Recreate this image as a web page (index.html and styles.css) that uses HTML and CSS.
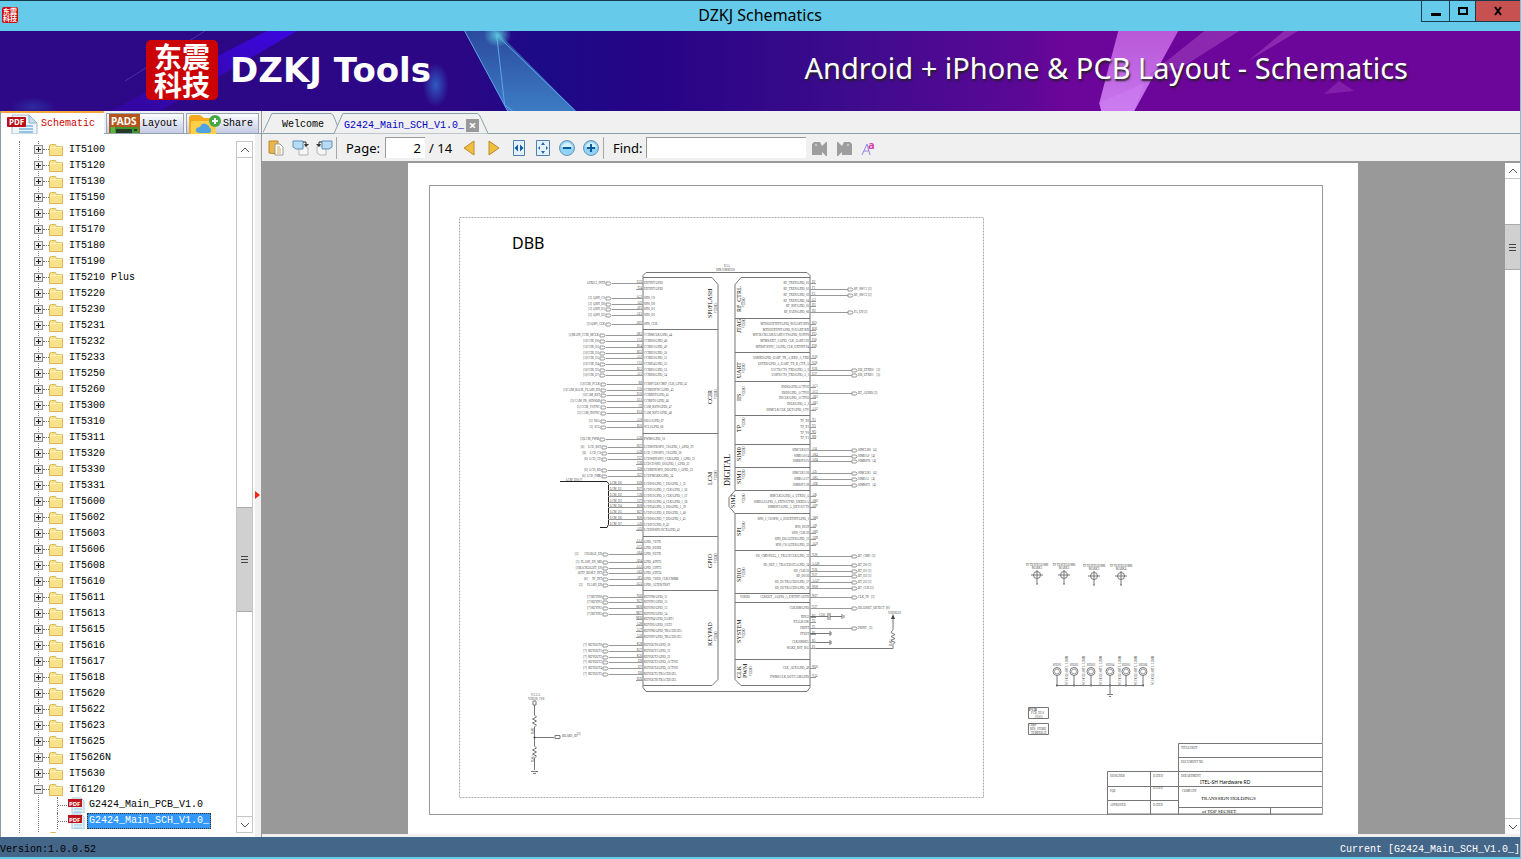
FILE: index.html
```html
<!DOCTYPE html>
<html lang="en">

<head>
    <meta charset="UTF-8">
    <meta name="viewport" content="width=device-width, initial-scale=1.0">
    <title>DZKJ Schematics</title>
    <link rel="stylesheet" href="styles.css">
</head>

<body>
    <header class="titlebar">
        <div class="app-icon"><span>东震</span><span>科技</span></div>
        <h1>DZKJ Schematics</h1>
        <div class="window-buttons">
            <button class="win" aria-label="Minimize"><svg width="12" height="12"><path d="M1 8h10v3H1z" /></svg></button>
            <button class="win win-max" aria-label="Maximize"><svg width="12" height="12"><path d="M2 3h8v6H2z" fill="none" stroke="#000" stroke-width="2" /></svg></button>
            <button class="win win-close" aria-label="Close"><svg width="12" height="12"><path d="M3 2l6 8M9 2l-6 8" stroke="#000" stroke-width="2" /></svg></button>
        </div>
    </header>

    <div class="banner">
        <svg class="banner-art" viewBox="0 0 1521 80" preserveAspectRatio="none">
            <defs>
                <linearGradient id="gBase">
                    <stop offset="0" stop-color="#2d0887" />
                    <stop offset=".3" stop-color="#2c0785" />
                    <stop offset=".36" stop-color="#1c0a86" />
                    <stop offset=".43" stop-color="#260485" />
                    <stop offset=".55" stop-color="#3b0b8c" />
                    <stop offset=".67" stop-color="#5a0895" />
                    <stop offset=".7" stop-color="#6c059a" />
                    <stop offset="1" stop-color="#6c0599" />
                </linearGradient>
                <linearGradient id="gBlue" x1="0" y1="0" x2="0" y2="1">
                    <stop offset="0" stop-color="#2b4a9e" />
                    <stop offset="1" stop-color="#3c7cc4" />
                </linearGradient>
                <linearGradient id="gRay" x1="0" y1="1" x2="1" y2="0">
                    <stop offset="0" stop-color="#3a06c0" stop-opacity=".4" />
                    <stop offset="1" stop-color="#3b07e0" />
                </linearGradient>
                <linearGradient id="gPink" x1="0" y1="0" x2="0" y2="1">
                    <stop offset="0" stop-color="#b958d8" />
                    <stop offset="1" stop-color="#c876ee" />
                </linearGradient>
                <radialGradient id="gGlow">
                    <stop offset="0" stop-color="#3070d0" stop-opacity=".8" />
                    <stop offset="1" stop-color="#3070d0" stop-opacity="0" />
                </radialGradient>
                <radialGradient id="gStar">
                    <stop offset="0" stop-color="#5cd0e0" stop-opacity=".9" />
                    <stop offset="1" stop-color="#5cd0e0" stop-opacity="0" />
                </radialGradient>
            </defs>
            <path d="M0 0h1521v80H0z" fill="url(#gBase)" />
            <path d="M267 0h30L160 80h-50z" fill="url(#gRay)" />
            <path d="M205 0L125 50" stroke="#5a4ac0" opacity=".6" />
            <ellipse cx="436" cy="54" rx="13" ry="22" fill="url(#gGlow)" />
            <ellipse cx="33" cy="76" rx="24" ry="10" fill="url(#gGlow)" opacity=".4" />
            <path d="M465 0h32l79 80h-68z" fill="url(#gBlue)" />
            <path d="M497 4l79 76M465 0l43 80M497 4l8 70 8 6" fill="none" stroke="#5fa4ea" />
            <ellipse cx="498" cy="4" rx="14" ry="12" fill="url(#gStar)" />
            <path d="M1119 0h60l-44 80h-33l-2-8z" fill="url(#gPink)" />
            <path d="M1100 72l45-20-10 28h-33z" fill="#d48cf5" opacity=".3" />
            <path d="M1205 0h35l-60 38-30 6zM1285 0h14l-50 30z" fill="#a040c0" opacity=".6" />
            <path d="M1340 50l15 10-30 3z" fill="#8b2bb0" opacity=".7" />
        </svg>
        <div class="brand">
            <div class="brand-logo"><span>东震</span><span>科技</span></div>
            <strong>DZKJ Tools</strong>
        </div>
        <p class="slogan">Android + iPhone &amp; PCB Layout - Schematics</p>
    </div>

    <main class="workspace">
        <aside class="sidebar">
            <nav class="side-tabs">
                <button class="side-tab active">
                    <svg width="32" height="20" viewBox="0 0 32 20">
                        <path d="M5 1h17l8 8v11H5z" fill="#eef5fb" stroke="#a8bccb" />
                        <path d="M22 1l8 8h-8z" fill="#c6dff0" stroke="#8fb2ca" />
                        <path d="M12 12h14M12 15h14M12 18h14" stroke="#94c3e6" stroke-width="2" />
                        <rect y="3" width="19" height="10" rx="1" fill="#b80f18" />
                        <text x="2" y="11" class="icon-text" font-size="8">PDF</text>
                    </svg>
                    <span>Schematic</span>
                </button>
                <button class="side-tab">
                    <svg width="31" height="19" viewBox="0 0 31 19">
                        <path d="M0 0h31v19H0z" fill="#b5541c" />
                        <path d="M1 19v-6h29v6z" fill="#3f9630" />
                        <path d="M7 19v-4h16v4zM25 15h3v2h-3z" fill="#243b2a" />
                        <path d="M3 13v6M5 13v6" stroke="#83cc4b" />
                        <text x="2" y="11" class="icon-text" font-size="10">PADS</text>
                    </svg>
                    <span>Layout</span>
                </button>
                <button class="side-tab">
                    <svg width="32" height="20" viewBox="0 0 32 20">
                        <path d="M0 4q0-3 3-3h8l4 3h11v16H0z" fill="#f5a91b" />
                        <path d="M2 9q0-2 3-2h22v13H2z" fill="#ffd04a" />
                        <path d="M10 19q-4-1-3-4 1-2 4-2 2-5 6-3 4 2 3 3 4 2 1 6z" fill="#4fa3e3" />
                        <circle cx="26" cy="7" r="6" fill="#45a845" />
                        <path d="M26 4v6M23 7h6" stroke="#fff" stroke-width="2" />
                    </svg>
                    <span>Share</span>
                </button>
            </nav>
            <div class="side-body">
                <ul class="tree" id="tree"></ul>
                <div class="scrollbar side-scroll">
                    <button class="arrow" aria-label="Up"><svg width="10" height="10"><path d="M1 7l4-4 4 4" /></svg></button>
                    <div class="track"><div class="thumb"></div></div>
                    <button class="arrow" aria-label="Down"><svg width="10" height="10"><path d="M1 3l4 4 4-4" /></svg></button>
                </div>
                <div class="splitter"><svg width="5" height="8"><path d="M0 0l5 4-5 4z" fill="#f22414" /></svg></div>
            </div>
        </aside>

        <section class="document">
            <nav class="doc-tabs">
                <button class="doc-tab">
                    <svg viewBox="0 0 76 21" preserveAspectRatio="none"><path d="M0 20.500L9 1.500h60q2 0 4 6l3 8" /></svg>
                    <span>Welcome</span>
                </button>
                <button class="doc-tab current">
                    <svg viewBox="0 0 158 21" preserveAspectRatio="none"><path d="M0 20.500L9 .500h137q2 0 4 5l7 15" /></svg>
                    <span>G2424_Main_SCH_V1.0_</span>
                    <i class="close">×</i>
                </button>
            </nav>

            <div class="toolbar">
                <button aria-label="Copy"><svg width="16" height="16"><path d="M1 1h9v13l-9-1z" fill="#eab649" stroke="#bb8730" /><path d="M7 4h5l3 3v8H7z" fill="#fff" stroke="#9b9b98" /><path d="M9 7h3M9 9h4M9 11h4M9 13h4" stroke="#cfa963" /></svg></button>
                <button aria-label="Rotate left"><svg width="17" height="16"><path d="M7 6h6l3 2v7H7z" fill="#f6f6f6" stroke="#b4b4b4" /><path d="M1 1h10v8H4L1 7z" fill="#b8dbf3" stroke="#6291b9" /><path d="M11 2h3v3" fill="none" stroke="#333" /><path d="M12 4h5l-3 3z" fill="#333" /></svg></button>
                <button aria-label="Rotate right"><svg width="17" height="16"><path d="M1 6h9v9H4l-3-2z" fill="#f6f6f6" stroke="#b4b4b4" /><path d="M6 1h10v6l-3 2H6z" fill="#b8dbf3" stroke="#6291b9" /><path d="M6 2H3v3" fill="none" stroke="#333" /><path d="M0 4h5L3 7z" fill="#333" /></svg></button>
                <span class="sep"></span>
                <label for="page">Page:</label>
                <input id="page" class="page-input" type="text" value="2">
                <span class="page-total">/ 14</span>
                <button class="nav-button" aria-label="Previous page"><svg width="12" height="16"><path d="M11 1v14L1 8z" fill="#f0bf3e" stroke="#b78c32" /></svg></button>
                <button class="nav-button" aria-label="Next page"><svg width="12" height="16"><path d="M1 1v14l10-7z" fill="#f0bf3e" stroke="#b78c32" /></svg></button>
                <button aria-label="Fit width"><svg width="12" height="16"><path d="M.5.500h11v15H.5z" fill="#e3f1fb" stroke="#4c7fb0" /><path d="M5 4.500v7L1.500 8zM7 4.500v7L10.500 8z" fill="#145c9e" /></svg></button>
                <button aria-label="Fit page"><svg width="14" height="16"><path d="M.5.500h13v15H.5z" fill="#e3f1fb" stroke="#4c7fb0" /><path d="M7 2l2 3H5zM7 14l2-3H5zM2 8l2-2v4zM12 8l-2-2v4z" fill="#2c68a4" /></svg></button>
                <button aria-label="Zoom out"><svg width="16" height="16"><circle cx="8" cy="8" r="7.500" fill="#91d2f7" stroke="#6b95b4" /><path d="M2 7q6-9 12 0z" fill="#d5effc" /><path d="M4 7h8v2H4z" fill="#0e5b9b" /></svg></button>
                <button aria-label="Zoom in"><svg width="16" height="16"><circle cx="8" cy="8" r="7.500" fill="#91d2f7" stroke="#6b95b4" /><path d="M2 7q6-9 12 0z" fill="#d5effc" /><path d="M4 7h3V4h2v3h3v2H9v3H7V9H4z" fill="#0e5b9b" /></svg></button>
                <span class="sep"></span>
                <label for="find" class="find-label">Find:</label>
                <input id="find" class="find-input" type="text">
                <button aria-label="Find previous"><svg width="16" height="16"><path d="M0 4l2-2h6l2 4 4-4h1v14h-1l-4-4v3H0z" fill="#9d9d9d" /><path d="M3 4h2v2H3z" fill="#c8c8c8" /></svg></button>
                <button aria-label="Find next"><svg width="16" height="16"><path d="M16 4l-2-2H8L6 6 2 2H1v14h1l4-4v3h10z" fill="#9d9d9d" /><path d="M11 4h2v2h-2z" fill="#c8c8c8" /></svg></button>
                <button aria-label="Match case"><svg width="16" height="24"><path d="M2 19L7 8l3 11M4 15h5" fill="none" stroke="#9a83e4" /><text x="8" y="13" class="case-mark">a</text></svg></button>
            </div>

            <div class="viewer">
                <div class="page-area">
                    <div class="sheet">
                        <svg id="schematic" class="schematic" viewBox="408 163 950 671">
                            <path class="frame" d="M429.500 185.500h893v629h-893z" />
                            <path class="dash" d="M459.500 217.500h524v580h-524z" />
                            <text x="512" y="249" class="block-title">DBB</text>

                            <!-- chip body -->
                            <path class="line" d="M646 272.500h161l3 3v412l-3 4H646l-3-4v-412z" />
                            <path class="line" d="M643 277.500h69l6 7v395l-6 6h-69" />
                            <path class="line" d="M810 277.500h-69l-6 7v206l-6 7v9l6 7v166l6 6h69" />
                            <text x="724" y="267" class="tiny">U1A</text>
                            <text x="716" y="271" class="tiny">SPR-UMS9230</text>
                            <text transform="translate(730 486) rotate(-90)" class="digital">DIGITAL</text>

                            <!-- lcd bus -->
                            <path class="bus" d="M560 481.500h47l1.500 2v41l-1.500 3h-7" />
                            <text x="566" y="481" class="tiny">LCM_D[0:7]</text>

                            <!-- divider, lower left -->
                            <text x="531" y="696" class="tiny">V.1.2.A</text>
                            <text x="528" y="700" class="tiny">VDD18_1V8</text>
                            <path class="line" d="M533 701h3v4h-3zM534.500 705v10l2 2-4 2 4 2-4 2 4 2-2 2v19l2 2-4 2 4 2-4 2 4 2-2 2v12M531 771.500h7M533 773.500h3M534 737.500h20M555 735.500h5v3h-5z" />
                            <circle cx="534.500" cy="737.500" r="1" />
                            <text x="562" y="737" class="tiny">BOARD_ID</text>
                            <text x="577" y="735" class="tiny">[3]</text>
                            <text transform="translate(534 734) rotate(-90)" class="tiny">R201</text>
                            <text transform="translate(534 762) rotate(-90)" class="tiny">R202</text>

                            <!-- reset and caps, right -->
                            <path class="line" d="M810 616.500h18M828 613v7M830 613v7M830 616.500h12M842 614v5M844 615v3M810 633.500h20M830 631v5M831 632v3M810 642.500h20M830 640v5M831 641v3M810 648.500h83v-4l2-2-4-2 4-2-4-2 4-2-4-2 2-3v-13" />
                            <path d="M891 619l2-5 2 5z" />
                            <text x="888" y="614" class="tiny">VDDIO18</text>
                            <text x="819" y="616" class="tiny">C201</text>
                            <text transform="translate(892 646) rotate(-90)" class="tiny">R203</text>

                            <!-- revision boxes -->
                            <path class="line" d="M1028.500 707.500h20v11h-20zM1028.500 723.500h20v11h-20z" />
                            <text x="1029" y="711" class="small">PCB</text>
                            <text x="1031" y="714" class="tiny">FCB_H1.0</text>
                            <text x="1035" y="718" class="tiny">(V.01)</text>
                            <text x="1029" y="726" class="tiny">Chip#</text>
                            <text x="1030" y="730" class="tiny">RES_STORE</text>
                            <text x="1031" y="734" class="tiny">TEMPERAT</text>

                            <!-- title block -->
                            <path class="line block" d="M1322 743.500h-143.500v71M1178 757.500h144M1107.500 814V771.500H1322M1107 786.500h215M1107 800.500h71M1150.500 771v43M1178 807.500h144M1270.500 807v7M1107 814h215" />
                            <text x="1181" y="749" class="tiny">TITLE/DEPT</text>
                            <text x="1181" y="763" class="tiny">DOCUMENT NO</text>
                            <text x="1181" y="777" class="tiny">DEPARTMENT</text>
                            <text x="1182" y="792" class="tiny">COMPANY</text>
                            <text x="1110" y="777" class="tiny">DESIGNER</text>
                            <text x="1110" y="792" class="tiny">PQE</text>
                            <text x="1110" y="806" class="tiny">APPROVED</text>
                            <text x="1153" y="777" class="tiny">DATED</text>
                            <text x="1153" y="789" class="tiny">DATED</text>
                            <text x="1153" y="806" class="tiny">DATED</text>
                            <text x="1200" y="784" class="dept">ITEL-SH Hardware RD</text>
                            <text x="1201" y="800" class="holding">TRANSSION HOLDINGS</text>
                            <text x="1202" y="813" class="holding">of TOP SECRET</text>
                        </svg>
                    </div>
                </div>
                <div class="scrollbar view-scroll">
                    <button class="arrow" aria-label="Up"><svg width="10" height="10"><path d="M1 7l4-4 4 4" /></svg></button>
                    <div class="track"><div class="thumb"></div></div>
                    <button class="arrow" aria-label="Down"><svg width="10" height="10"><path d="M1 3l4 4 4-4" /></svg></button>
                </div>
            </div>
        </section>
    </main>

    <footer class="statusbar">
        <span class="version">Version:1.0.0.52</span>
        <span>Current [G2424_Main_SCH_V1.0_]</span>
    </footer>

    <script src="script.js"></script>
</body>

</html>
```
FILE: styles.css
```css
* {
    box-sizing: border-box;
}

body {
    margin: 0;
    height: 100vh;
    display: flex;
    flex-direction: column;
    overflow: hidden;
    background: #f0f0f0;
    border-right: 1px solid #66cbea;
    border-bottom: 2px solid #66cbea;
    font-family: "Liberation Mono", "Noto Sans CJK SC", monospace;
    font-size: 10px;
    color: #000;
}

button {
    font: inherit;
    color: inherit;
    border: none;
    background: none;
    padding: 0;
}

svg {
    display: block;
    flex: none;
}

/* title bar */
.titlebar {
    display: flex;
    align-items: center;
    position: relative;
    height: 31px;
    flex: none;
    background: #66cbea;
    border-top: 1px solid #16394b;
}

.titlebar h1 {
    flex: 1;
    margin: 0;
    text-align: center;
    font: 16px/24px "Noto Sans", sans-serif;
    padding-bottom: 2px;
}

.app-icon {
    position: absolute;
    left: 2px;
    top: 6px;
    width: 16px;
    height: 16px;
    padding-top: 1px;
    border-radius: 2px;
    background: #cc0a0a;
    color: #fff;
    font: bold 7px/7px "Noto Sans CJK SC", sans-serif;
    text-align: center;
}

.app-icon span,
.brand-logo span {
    display: block;
}

.window-buttons {
    position: absolute;
    right: 0;
    top: 0;
    display: flex;
    height: 21px;
    border: 1px solid #163b4b;
    border-width: 0 0 1px 1px;
}

.win {
    display: flex;
    align-items: center;
    justify-content: center;
    width: 28px;
    border-right: 1px solid #163b4b;
}

.win-max {
    width: 26px;
}

.win-close {
    width: 44px;
    border-right: none;
    background: #c75050;
}

/* banner */
.banner {
    position: relative;
    flex: none;
    display: flex;
    align-items: center;
    justify-content: space-between;
    height: 80px;
    padding: 0 112px 0 146px;
    color: #fff;
}

.banner-art {
    position: absolute;
    top: 0;
    left: 0;
    width: 100%;
    height: 100%;
}

.brand {
    position: relative;
    display: flex;
    align-items: center;
    gap: 12px;
    margin-bottom: 2px;
}

.brand-logo {
    width: 72px;
    height: 60px;
    padding-top: 2px;
    border-radius: 5px;
    background: #cb0307;
    font: bold 28px/28px "Noto Sans CJK SC", sans-serif;
    text-align: center;
}

.brand strong {
    font: bold 34px "DejaVu Sans", sans-serif;
}

.slogan {
    position: relative;
    margin: 0 0 8px;
    font: 29px "Noto Sans", sans-serif;
    text-shadow: 1px 2px 2px #222;
    white-space: nowrap;
}

/* workspace */
.workspace {
    flex: 1;
    min-height: 0;
    display: flex;
}

.sidebar {
    width: 261px;
    flex: none;
    display: flex;
    flex-direction: column;
    border-left: 1px solid #8a9ba6;
}

.side-tabs {
    display: flex;
    align-items: flex-end;
    gap: 2px;
    height: 23px;
    border-bottom: 1px solid #91a4ae;
}

.side-tab {
    display: flex;
    align-items: center;
    gap: 2px;
    height: 20px;
    padding: 0 5px 0 2px;
    border: 1px solid #98a5b7;
    border-bottom: none;
    background: linear-gradient(#fdfdff, #c5cae5);
}

.side-tab.active {
    height: 23px;
    width: 103px;
    margin-bottom: -1px;
    border: none;
    border-top: 2px solid #f5a73b;
    background: #fff;
    color: #c00;
    padding-left: 6px;
}

.icon-text {
    font-family: "Noto Sans", sans-serif;
    font-weight: bold;
    fill: #fff;
}

.side-body {
    flex: 1;
    min-height: 0;
    display: flex;
    background: #fff;
}

.tree {
    position: relative;
    flex: 1;
    margin: 7px 0 4px 18px;
    padding: 0;
    list-style: none;
    overflow: hidden;
    border-left: 1px dotted #777;
}

.tree li {
    display: flex;
    align-items: center;
    height: 16px;
    padding-left: 14px;
    background: repeating-linear-gradient(#777 0 1px, #fff 1px 2px) 18px 0 / 1px 16px no-repeat;
    white-space: nowrap;
}

.expander {
    width: 9px;
    height: 9px;
    flex: none;
    background: linear-gradient(#222, #222) center / 5px 1px no-repeat, #ececec;
    border: 1px solid #8d8d8d;
}

.expander.plus {
    background: linear-gradient(#222, #222) center / 5px 1px no-repeat, linear-gradient(#222, #222) center / 1px 5px no-repeat, #ececec;
}

.stem {
    width: 6px;
    border-top: 1px dotted #777;
}

.tree li svg {
    margin-right: 6px;
}

.tree .leaf {
    padding-left: 37px;
}

.leaf .stem {
    width: 11px;
    height: 16px;
    border-left: 1px dotted #777;
    border-top: none;
    background: repeating-linear-gradient(90deg, #777 0 1px, #fff 1px 2px) 0 8px / 11px 1px no-repeat;
}

.tree .leaf svg {
    margin-right: 2px;
}

.leaf a {
    padding: 0 1px;
    line-height: 14px;
    border: 1px solid transparent;
    color: #000;
    text-decoration: none;
}

.leaf.selected a {
    background: #3399ff;
    border: 1px dotted #402a10;
    color: #fff;
}

.scrollbar {
    display: flex;
    flex-direction: column;
    width: 17px;
    border: 1px solid #c4c4c4;
    background: #fff;
}

.side-scroll {
    margin: 7px 2px 4px 0;
}

.view-scroll {
    width: 15px;
    border-width: 0;
}

.arrow {
    display: flex;
    align-items: center;
    justify-content: center;
    height: 16px;
    flex: none;
    border-bottom: 1px solid #c4c4c4;
}

.arrow:last-child {
    border-bottom: none;
    border-top: 1px solid #c4c4c4;
}

.arrow path {
    fill: none;
    stroke: #555;
}

.track {
    flex: 1;
    display: flex;
    flex-direction: column;
}

/* grip lines in the middle of the thumb */
.thumb {
    height: 105px;
    margin-top: 349px;
    border: 1px solid #aaa;
    border-width: 1px 0;
    background: repeating-linear-gradient(#444 0 1px, transparent 1px 3px) center / 7px 7px no-repeat, #d0d0d0;
}

.view-scroll .thumb {
    height: 46px;
    margin-top: 45px;
}

.splitter {
    display: flex;
    align-items: center;
    width: 6px;
    padding-top: 18px;
    background: #f0f0f0;
}

/* document tabs */
.document {
    flex: 1;
    min-width: 0;
    display: flex;
    flex-direction: column;
    border-left: 1px solid #999;
}

.doc-tabs {
    display: flex;
    align-items: flex-end;
    flex: none;
    height: 23px;
    padding-left: 1px;
    border-bottom: 1px solid #8ba0ac;
}

.doc-tab {
    position: relative;
    display: flex;
    align-items: center;
    height: 21px;
    padding: 3px 14px 0 19px;
}

.doc-tab svg {
    position: absolute;
    top: 0;
    left: 0;
    width: 100%;
    height: 100%;
    fill: #f0f0f0;
    stroke: #8ba0ac;
}

.doc-tab span,
.doc-tab .close {
    position: relative;
}

.doc-tab.current {
    margin: 0 0 -1px -4px;
    padding: 3px 10px 0;
    color: #0000c8;
}

.doc-tab .close {
    width: 13px;
    height: 13px;
    margin-left: 2px;
    background: #999;
    color: #fff;
    font: bold 13px/13px "Noto Sans", sans-serif;
}

/* toolbar */
.toolbar {
    display: flex;
    align-items: center;
    flex: none;
    height: 29px;
    padding-left: 2px;
    border-bottom: 2px solid #999;
    font: 13px "Noto Sans", sans-serif;
}

.toolbar button {
    display: flex;
    align-items: center;
    justify-content: center;
    width: 24px;
    height: 24px;
}

.toolbar .nav-button {
    width: 25px;
}

.sep {
    width: 1px;
    height: 22px;
    margin-right: 9px;
    background: #a8a8a8;
}

.toolbar label {
    margin-right: 5px;
}

.toolbar .find-label {
    margin-right: 3px;
}

.toolbar input {
    height: 21px;
    padding: 0 4px;
    border: 1px solid #999;
    border-width: 1px 0 0 1px;
    background: #fff;
    font: inherit;
}

.toolbar .page-input {
    width: 40px;
    text-align: right;
}

.page-total {
    width: 28px;
    margin-left: 4px;
}

.find-input {
    width: 160px;
    margin-right: 2px;
}

.case-mark {
    font: bold 11px "Noto Sans", sans-serif;
    fill: #d43fb0;
}

/* page viewer */
.viewer {
    flex: 1;
    min-height: 0;
    display: flex;
    margin-bottom: 3px;
}

.page-area {
    flex: 1;
    display: flex;
    justify-content: center;
    overflow: hidden;
    background: #999;
}

.sheet {
    background: #fff;
    margin-right: 1px;
}

.schematic {
    width: 950px;
    height: 671px;
    font-family: "Liberation Serif", serif;
    fill: #444;
}

.frame,
.line,
.dash,
.bus,
.wire {
    fill: none;
    stroke: #777;
    stroke-width: 1px;
}

.frame {
    stroke: #999;
}

.wire {
    stroke: #999;
}

.dash {
    stroke: #aaa;
    stroke-dasharray: 2 1;
}

.bus {
    stroke: #222;
}

.tiny {
    font-size: 3px;
    white-space: pre;
}

.small {
    font-size: 4px;
    font-weight: bold;
}

.group {
    font-size: 6px;
    fill: #000;
}

.digital {
    font-size: 8px;
    fill: #000;
}

.block-title {
    font: 16px "Noto Sans", sans-serif;
    fill: #000;
}

.dept {
    font: 5px "Noto Sans", sans-serif;
    fill: #000;
}

.holding {
    font-size: 5px;
    fill: #000;
}

/* status bar */
.statusbar {
    flex: none;
    display: flex;
    align-items: center;
    justify-content: space-between;
    height: 20px;
    padding-top: 4px;
    background: #446688;
    color: #fff;
}

.version {
    color: #000;
}
```
FILE: script.js
```js
const folders = ['IT5100', 'IT5120', 'IT5130', 'IT5150', 'IT5160', 'IT5170', 'IT5180', 'IT5190', 'IT5210 Plus',
    'IT5220', 'IT5230', 'IT5231', 'IT5232', 'IT5233', 'IT5250', 'IT5260', 'IT5300', 'IT5310', 'IT5311', 'IT5320',
    'IT5330', 'IT5331', 'IT5600', 'IT5602', 'IT5603', 'IT5606', 'IT5608', 'IT5610', 'IT5611', 'IT5613', 'IT5615',
    'IT5616', 'IT5617', 'IT5618', 'IT5620', 'IT5622', 'IT5623', 'IT5625', 'IT5626N', 'IT5630', 'IT6120'];
const files = ['G2424_Main_PCB_V1.0', 'G2424_Main_SCH_V1.0_'];

const folderIcon = '<svg width="14" height="13"><path d="M.5 2.500l2-1h4l1 2h6v9H.5z" fill="#fbe28a" stroke="#dcb552"/><path d="M1 5l12-1" stroke="#fff6c9"/></svg>';
const pdfIcon = '<svg width="17" height="16"><path d="M4 1h9l3 3v12H4z" fill="#e6f2fa" stroke="#a9c6d8"/><path d="M6 12h8M6 15h8" stroke="#8ec6e9"/><path d="M0 2h14v8H0z" fill="#c0141c"/><text x="1" y="9" class="icon-text" font-size="6">PDF</text></svg>';

let rows = '';
folders.forEach(name => {
    const sign = name === 'IT6120' ? '' : ' plus';
    rows += `<li><button class="expander${sign}" aria-label="Toggle ${name}"></button><span class="stem"></span>${folderIcon}<span>${name}</span></li>`;
});
files.forEach((name, i) => {
    rows += `<li class="leaf${i === 1 ? ' selected' : ''}"><span class="stem"></span>${pdfIcon}<a href="#">${name}</a></li>`;
});
rows += `<li><button class="expander plus" aria-label="Toggle"></button><span class="stem"></span>${folderIcon}</li>`;
document.getElementById('tree').innerHTML = rows;

// [y, pin, signal, port label, port x]
const leftPins = [
    [283, 'U23', 'EXTINT/GPIO', 'GPIO13_INT9', 606], [289, 'T24', 'EXTINT/GPIO'],
    [298, 'AG2', 'SPI0_CS', '[3]  QSPI_CS', 606], [304, 'AJ2', 'SPI0_D0', '[3]  QSPI_D0', 606],
    [309, 'AF2', 'SPI0_D1', '[3]  QSPI_D1', 606], [315, 'AE1', 'SPI0_D2', '[3]  QSPI_D2', 606], [324, 'AH1', 'SPI0_CLK', '[3] QSPI_CLK', 606],
    [335, 'AK3', 'CCIRMCLK/GPIO_44', '[5]MAIN_CCIR_MCLK', 600], [341, 'C13', 'CCIRD0/GPIO_48', '[5]CCIR_D0', 600],
    [347, 'B14', 'CCIRD1/GPIO_49', '[5]CCIR_D1', 600], [353, 'B13', 'CCIRD2/GPIO_50', '[5]CCIR_D2', 600],
    [358, 'A12', 'CCIRD3/GPIO_51', '[5]CCIR_D3', 600], [364, 'C12', 'CCIRD4/GPIO_52', '[5]CCIR_D4', 600],
    [370, 'B11', 'CCIRD5/GPIO_53', '[5]CCIR_D5', 600], [375, 'A11', 'CCIRD6/GPIO_54', '[5]CCIR_D7', 600],
    [384, 'B9', 'CCIRPCLK/CMIF_CLK_GPIO_41', '[5]CCIR_PCLK', 601], [390, 'C10', 'CCIRHSYNC/GPIO_43', '[5]CAM_BACK_FLASH_EN', 601],
    [395, 'D10', 'CCIRRST/GPIO_45', '[5]CAM_RST', 601], [401, 'E11', 'CCIRPD1/GPIO_46', '[5] CAM_PD_SENSOR', 601],
    [407, 'C9', 'CAM_RST0/GPIO_47', '[5] CCIR_VSYNC', 601], [413, 'D12', 'CAM_RST1/GPIO_48', '[5] CAM_HSYNC', 601],
    [421, 'A10', 'SDA1/GPIO_67', '[5]  SDA', 601], [427, 'B10', 'SCL1/GPIO_68', '[5]  SCL', 601],
    [439, 'G26', 'PWM0/GPIO_10', '[3]LCM_PWM', 600],
    [447, 'H27', 'LCDRSTB/SPI1_CS/GPIO_1_GPIO_29', '[6]     LCD_RST', 602], [453, 'G28', 'LCD_CSN/SPI1_CS/GPIO_30', '[6]     LCD_CS', 602],
    [459, 'F27', 'LCDWRN/SPI1_CLK/GPIO_1_GPIO_31', '[6]  LCD_CD', 602], [464, 'F28', 'LCDCD/SPI1_DI/GPIO_1_GPIO_32'],
    [470, 'E28', 'LCDRDN/SPI1_DO/GPIO_1_GPIO_33', '[6]  LCD_RD', 602], [476, 'E27', 'LCDFMARK/GPIO_34', '[6]  LCD_FMK', 602],
    [484, 'D28', 'LCDD0/GPIO_1_DO/GPIO_1_35'], [490, 'D27', 'LCDD1/GPIO_2_CLK/GPIO_1_36'],
    [496, 'C28', 'LCDD2/GPIO_3_CLK/GPIO_1_37'], [502, 'C27', 'LCDD3/GPIO_4_CLK/GPIO_1_38'],
    [507, 'B28', 'LCDD4/GPIO_5_DO/GPIO_1_39'], [513, 'B27', 'LCDD5/GPIO_6_DO/GPIO_1_40'],
    [519, 'B26', 'LCDD6/GPIO_7_DO/GPIO_1_41'], [525, 'A26', 'LCDD7/GPIO_8_42'], [530, 'A25', 'LCDD8/SPI1/DCX/GPIO_43'],
    [542, 'AA3', 'GPIO_7/UTX'], [548, 'AC5', 'GPIO_8/URX'], [554, 'AB4', 'GPIO_9/UTX', '[3]        CHARGE_EN', 603],
    [562, 'AD4', 'GPIO_4/INT2', '[5]  FLASH_EN_MD', 603], [568, 'AA5', 'GPIO_5/INT3', '[3]BACKLIGHT_EN', 603],
    [573, 'AE5', 'GPIO_6/INT4', '[6]TP_RESET_INT', 603], [579, 'AF5', 'GPIO_7/SPI0_CLK/CMMB', '[6]      TP_INT', 603],
    [585, 'AG5', 'GPIO_ALTER/TRST', '[3]      FLASH_EN', 603],
    [597, 'N26', 'KEYIN0/GPIO_11', '[7] KEYIN0', 603], [602, 'N27', 'KEYIN1/GPIO_12', '[7] KEYIN1', 603],
    [608, 'M28', 'KEYIN2/GPIO_13', '[7] KEYIN2', 603], [614, 'M27', 'KEYIN3/GPIO_14', '[7] KEYIN3', 603],
    [619, 'M26', 'KEYIN4/GPIO_UART1'], [625, 'L28', 'KEYIN5/GPIO_1/UT2'], [631, 'L27', 'KEYIN6/GPIO_TRACEDATA'],
    [637, 'L26', 'KEYIN7/GPIO_TRACEDATA'],
    [645, 'K28', 'KEYOUT0/GPIO_20', '[7]  KEYOUT0', 603], [651, 'K27', 'KEYOUT1/GPIO_21', '[7]  KEYOUT1', 603],
    [657, 'K26', 'KEYOUT2/GPIO_22', '[7]  KEYOUT2', 603], [662, 'J28', 'KEYOUT3/GPIO_ACTIVE', '[7]  KEYOUT3', 603],
    [668, 'J27', 'KEYOUT4/GPIO_ACTIVE', '[7]  KEYOUT4', 603], [674, 'J26', 'KEYOUT5/TRACEDATA', '[7]  KEYOUT5', 603],
    [680, 'H26', 'KEYOUT6/TRACEDATA'],
];

const rightPins = [
    [283, 'E2', 'RF_TXEN/GPIO_01'], [289, 'F1', 'RF_TXEN/GPIO_02', 'RF_SWC1 [2]', 848], [295, 'F3', 'RF_TXEN/GPIO_03', 'RF_SWC2 [2]', 848],
    [301, 'G2', 'RF_TXEN/GPIO_04'], [306, 'H1', 'RF_RST/GPIO_05'], [312, 'H2', 'RF_PAEN/GPIO_06', 'PA_EN [2]', 848],
    [324, 'R25', 'MTDO/EXTINT/GPIO_90/UART1RTS'], [330, 'R26', 'MTDI/EXTINT/GPIO_91/UART1RX'],
    [335, 'P25', 'MTCK/CKL32K/UART1CTS/GPIO_92/INT0'], [341, 'P26', 'MTMS/EXT_1/GPIO_CLK_UART1/93'],
    [347, 'P28', 'MTRST/SYNC_1/GPIO_CLK_EXTINT/94'],
    [358, 'V26', 'U0RXD/GPIO_UART_TX_A_RXD_A_TXD'], [364, 'V28', 'U0TXD/GPIO_A_UART_TX_B_CTX_A'],
    [370, 'U26', 'U1CTS/CTS_TXD/GPIO_A_0', 'DB_UTXD0    [3]', 852], [375, 'U27', 'U1RTS/CTS_TXD/GPIO_A_1', 'DB_UTXD1    [3]', 852],
    [387, 'AC1', 'IISDO/GPIO/ACTIVE'], [393, 'AC2', 'IISDI/GPIO_ACTIVE', 'BT_AUDIO [3]', 852],
    [398, 'AB2', 'IISCLK/GPIO_ACTIVE'], [404, 'AB1', 'IISLR/GPIO_A_2'], [410, 'AA2', 'IISMCLK/CLK_OUT/GPIO_1/TV'],
    [421, 'Y5', 'TP_X0'], [427, 'Y3', 'TP_X1'], [433, 'W5', 'TP_Y0'], [438, 'W6', 'TP_Y1'],
    [450, 'AJ4', 'SIMCLK0/23', 'SIMCLK0   [4]', 852], [456, 'AK4', 'SIMDA0/24', 'SIMDA0   [4]', 852], [461, 'AH4', 'SIMRST0/25', 'SIMRST0   [4]', 852],
    [473, 'AJ5', 'SIMCLK1/26', 'SIMCLK1   [4]', 852], [479, 'AK5', 'SIMDA1/27', 'SIMDA1   [4]', 852], [485, 'AH6', 'SIMRST1/28', 'SIMRST1   [4]', 852],
    [496, 'AJ6', 'SIMCLK2/GPIO_A_UTXD3_A'], [502, 'AK6', 'SIMDA2/GPIO_A_EXT0/UTXD_URXD3/A'], [507, 'AH7', 'SIMRST2/GPIO_A_EXT1/UCTS'],
    [519, 'AK8', 'SPI0_2_CS/SPI0_A_DI/EXTINT/GPIO_1'], [527, 'AJ9', 'SPI0_DI/29'], [533, 'AK9', 'SPI0_CLK/30'],
    [539, 'AH9', 'SPI0_DO/ALTER/GPIO_31'], [545, 'AG9', 'SPI0_CS/ALTER/GPIO_32'],
    [556, 'Y28', 'SD_CMD/PULL_1_TRACECLK/GPIO_33', 'BT_CMD  [3]', 852], [565, 'AA28', 'SD_DET_1_TRACEDATA/GPIO_34', 'BT_D0 [3]', 852],
    [571, 'Y26', 'SD_CLK/35', 'BT_D1 [3]', 852], [576, 'Y27', 'SD_D0/36', 'BT_D2 [3]', 852],
    [582, 'AA27', 'SD_D1/TRACED/GPIO_37', 'BT_D3 [3]', 852], [588, 'W28', 'SD_D2/TRACED/GPIO_38', 'BT_CLK [3]', 852],
    [597, 'W27', 'CLKOUT_A/GPIO_A_EXTINT/AUTO', 'CLK_IN   [3]', 852],
    [608, 'V27', 'CLK26M/GPIO', 'HEADSET_DETECT  [8]', 852], [617, 'R2', 'XIN32'], [622, 'T3', 'XTALB/32K'],
    [628, 'T1', 'PBINT', 'PBINT   [3]', 852], [634, 'R1', 'PTEST'], [642, 'R5', 'CLK26MSEL'], [648, 'P2', 'WAKE_RST_B/G'],
    [668, 'W26', 'CLK_AUX/GPIO_49'], [677, 'V24', 'PWM0/CLK_OUT/CAM/GPIO'],
];

const leftGroups = [['SPI/FLASH', 318], ['CCIR', 404], ['LCM', 485], ['GPIO', 568], ['KEYPAD', 646]];
const rightGroups = [['RF_CTRL', 312], ['JTAG', 333], ['UART', 378], ['IIS', 401], ['TP', 432], ['SIM0', 461],
    ['SIM1', 484], ['SIM2', 508], ['SPI', 536], ['SDIO', 582], ['SYSTEM', 643], ['CLK', 678]];
const leftLines = [329, 433, 536, 590];
const rightLines = [318, 352, 381, 415, 444, 467, 490, 513, 550, 593, 602, 659];

const text = (x, y, s, cls = 'tiny', anchor = 'start') => `<text x="${x}" y="${y}" class="${cls}" text-anchor="${anchor}">${s}</text>`;
const upText = (x, y, s, cls) => `<text transform="translate(${x} ${y}) rotate(-90)" class="${cls}">${s}</text>`;
const line = (d, cls = 'wire') => `<path class="${cls}" d="${d}"/>`;

let art = '';
leftPins.forEach(([y, pin, signal, label, x]) => {
    art += text(644, y + 1, signal) + text(642, y, pin, 'tiny', 'end');
    if (label) {
        art += line(`M${x + 6} ${y + .5}H643M${x} ${y - 1}h4l1 1.500-1 1.500h-4z`) + text(x - 1, y + 1, label, 'tiny', 'end');
    } else if (y > 483 && y < 526) {
        art += line(`M608 ${y + .5}h35`) + text(610, y, 'LCM_D' + Math.round((y - 484) / 6));
    } else {
        art += line(`M636 ${y + .5}h7`);
    }
});
rightPins.forEach(([y, pin, signal, label, x]) => {
    art += text(809, y + 1, signal, 'tiny', 'end') + text(812, y, pin);
    if (label) {
        art += line(`M810 ${y + .5}H${x}M${x} ${y - 1}h4l1 1.500-1 1.500h-4z`) + text(x + 6, y + 1, label);
    } else {
        art += line(`M810 ${y + .5}h6`);
    }
});
leftLines.forEach(y => art += line(`M643 ${y + .5}h75`, 'line'));
rightLines.forEach(y => art += line(`M735 ${y + .5}h75`, 'line'));
leftGroups.forEach(([s, y]) => art += upText(712, y, s, 'group') + upText(717, y - 5, 'VDDIO', 'tiny'));
rightGroups.forEach(([s, y]) => art += upText(s === 'SIM2' ? 735 : 741, y, s, 'group') + upText(745, y - 5, s === 'CLK' ? '' : 'VDDIO', 'tiny'));
art += upText(747, 678, 'PWM', 'group') + upText(752, 676, 'VDDIO', 'tiny') + text(740, 598, 'VDDIO');

// test points
[[1037, 575], [1064, 575], [1094, 576], [1121, 576]].forEach(([x, y], i) => {
    art += `<circle class="line" cx="${x}" cy="${y}" r="3.500"/>` + line(`M${x - 6} ${y}h12M${x} ${y - 5}v14M${x - 1} ${y + 9}h2`, 'line');
    art += text(x, y - 9, 'TP TESTPAD/MK', 'tiny', 'middle') + text(x, y - 6, 'MARK' + (i + 1), 'tiny', 'middle');
});

// shield holes on the ground rail
[1057, 1074, 1091, 1110, 1126, 1143].forEach((x, i) => {
    art += `<circle class="line" cx="${x}" cy="671.500" r="4"/><circle class="wire" cx="${x}" cy="671.500" r="2.500"/>`;
    art += line(`M${x} 675v10`, 'line') + `<circle cx="${x}" cy="685.500" r="1"/>`;
    art += text(x, 666, 'SH20' + (i + 1), 'tiny', 'middle') + upText(x + 11, 685, 'SC HOLE-MTL 1.2MM', 'tiny');
});
art += line('M1057 685.500h86M1110 686v8M1107 694.500h6M1109 696.500h2', 'line');

document.getElementById('schematic').insertAdjacentHTML('beforeend', art);
```
